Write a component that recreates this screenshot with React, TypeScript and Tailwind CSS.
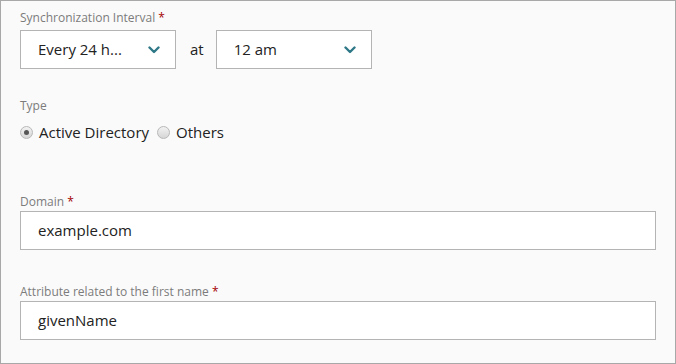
import React from "react";

function Chevron() {
  return (
    <svg width="12" height="8" viewBox="0 0 12 8" className="shrink-0">
      <path d="M1.5 1.5 L6 6 L10.5 1.5" fill="none" stroke="#2f7887" strokeWidth="2.4" strokeLinecap="round" strokeLinejoin="round" />
    </svg>
  );
}

function Select({ value }: { value: string }) {
  return (
    <div className="flex h-[39px] w-[156px] items-center border border-[#b4b4b4] bg-white pl-[17px] pr-[15px]">
      <span className="flex-1 text-[15px] text-[#222]">{value}</span>
      <Chevron />
    </div>
  );
}

function Label({ text }: { text: string }) {
  return (
    <div className="text-[12px] leading-[16px] text-[#7c7c7c]">
      {text} <span className="text-[#a40000]">*</span>
    </div>
  );
}

function Radio({ checked, label }: { checked?: boolean; label: string }) {
  return (
    <label className="flex items-center gap-[6px] text-[15px] text-[#222]">
      <span className="flex h-[13px] w-[13px] items-center justify-center rounded-full border border-[#b8b8b8] bg-gradient-to-b from-[#f2f2f2] to-[#d6d6d6]">
        {checked && <span className="h-[5px] w-[5px] rounded-full bg-[#555]" />}
      </span>
      {label}
    </label>
  );
}

export default function App() {
  return (
    <div
      className="box-border h-[364px] w-[676px] border border-[#a8a8a8] bg-[#fafafa] pl-[19px] pr-[19px] pt-[9px]"
      style={{ fontFamily: '"Open Sans", "Noto Sans", sans-serif' }}
    >
      <Label text="Synchronization Interval" />
      <div className="mt-[4px] flex items-center">
        <Select value="Every 24 h..." />
        <span className="ml-[14px] mr-[12px] text-[15px] text-[#222]">at</span>
        <Select value="12 am" />
      </div>

      <div className="mt-[29px] text-[12px] leading-[16px] text-[#7c7c7c]">Type</div>
      <div className="mt-[7px] flex items-center gap-[8px]">
        <Radio checked label="Active Directory" />
        <Radio label="Others" />
      </div>

      <div className="mt-[50px]">
        <Label text="Domain" />
      </div>
      <div className="mt-[1px] flex h-[39px] items-center border border-[#b4b4b4] bg-white pl-[17px] text-[15px] text-[#222]">
        example.com
      </div>

      <div className="mt-[34px]">
        <Label text="Attribute related to the first name" />
      </div>
      <div className="mt-[1px] flex h-[39px] items-center border border-[#b4b4b4] bg-white pl-[17px] text-[15px] text-[#222]">
        givenName
      </div>
    </div>
  );
}
